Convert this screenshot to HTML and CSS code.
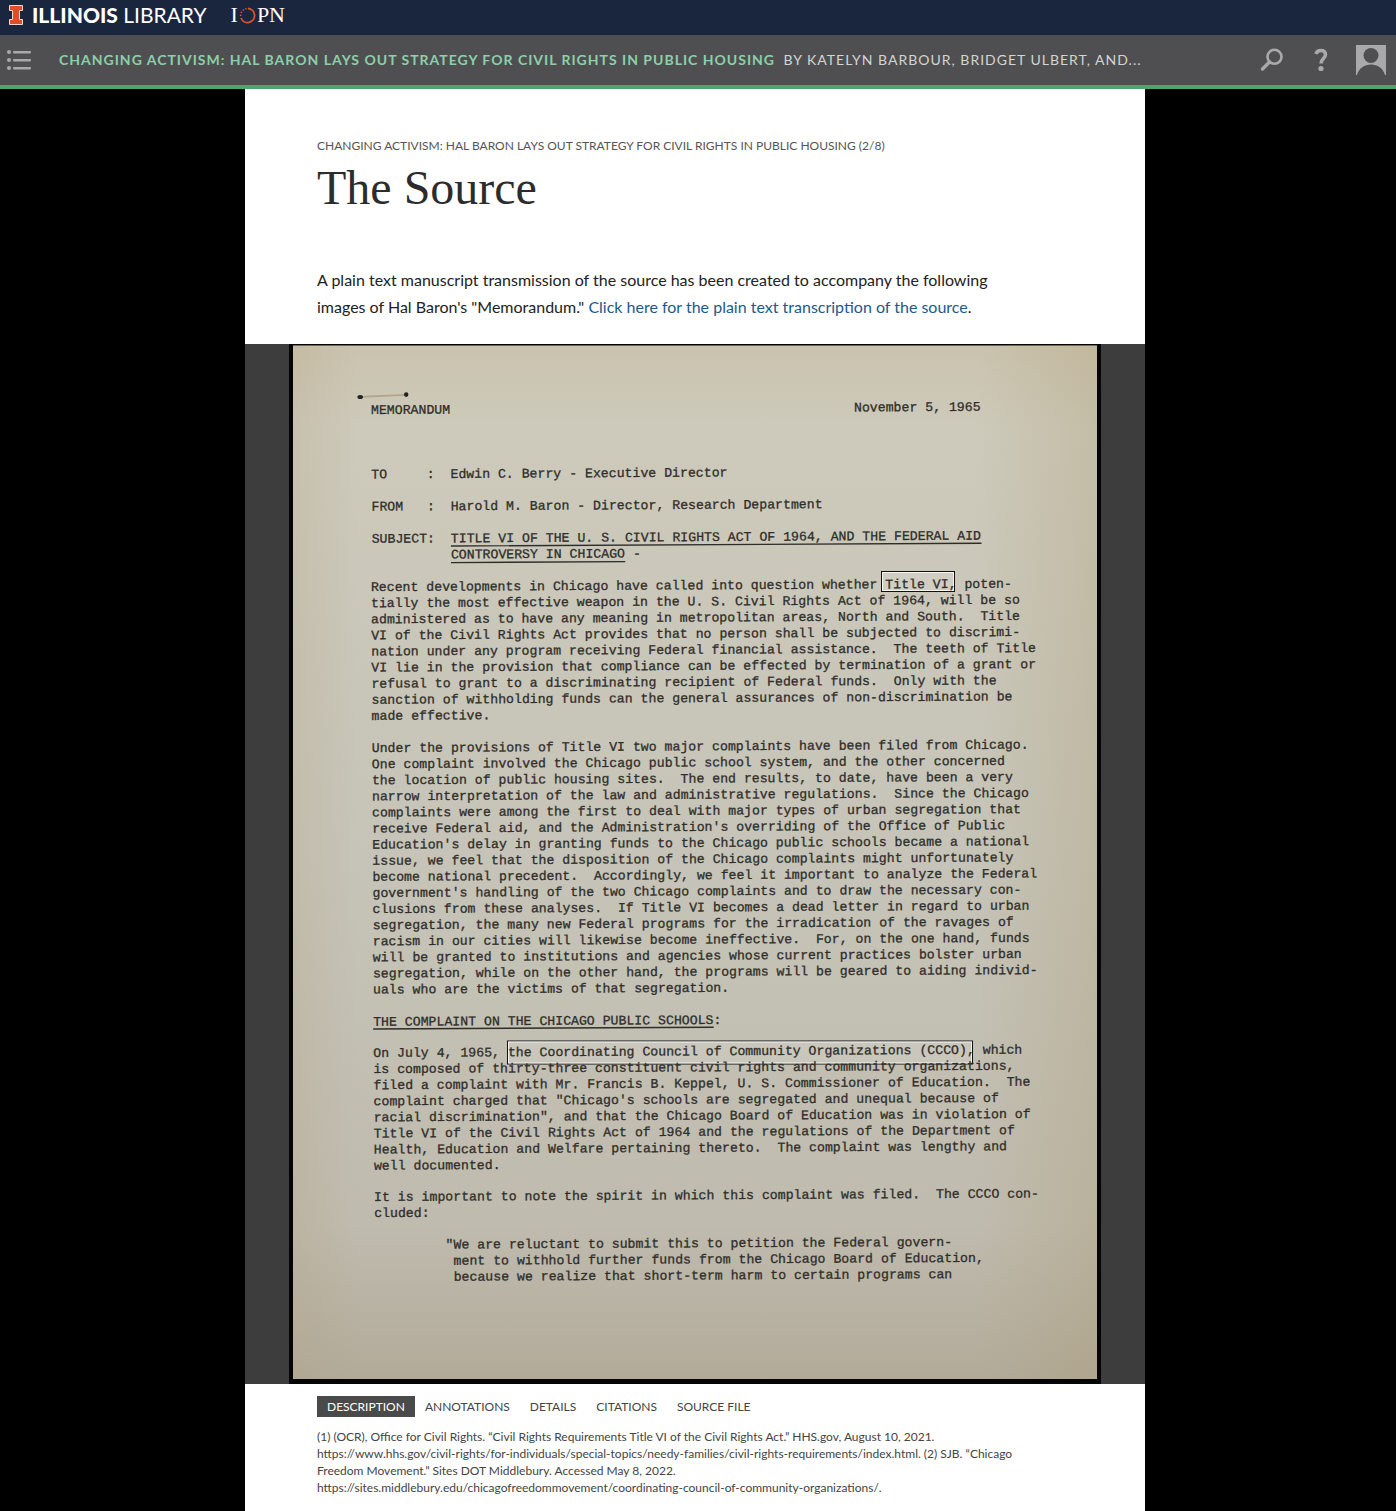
FILE: index.html
```html
<!DOCTYPE html>
<html lang="en">
<head>
<meta charset="utf-8">
<meta name="viewport" content="width=device-width, initial-scale=1">
<title>The Source</title>
<link rel="stylesheet" href="styles.css">
</head>
<body>
<header>
  <div class="brand-bar">
    <a class="brand" href="#" aria-label="Illinois Library">
      <svg class="block-i" width="14" height="20" viewBox="0 0 14 20" aria-hidden="true"><path d="M.5.5h13v5h-3v9h3v5H.5v-5h3v-9h-3z" fill="#e04e27" stroke="#f3d9d0"/></svg>
      <span class="brand-name"><strong>ILLINOIS</strong> LIBRARY</span>
    </a>
    <a class="iopn" href="#" aria-label="IOPN">I<svg width="17" height="17" viewBox="0 0 17 17" aria-hidden="true" fill="none" stroke="#d9532c"><path d="M9 1.500A7 7 0 1 1 2 11" stroke-width="1.800"/><path d="M1.700 9A7 7 0 0 1 8 1.500" stroke-width="1.600" stroke-dasharray="1.400 1.600"/></svg>PN</a>
  </div>
  <nav class="nav-bar">
    <button class="icon-button" aria-label="Contents"><svg width="24" height="20" viewBox="0 0 24 20" fill="#a9a9ab"><circle cx="2" cy="2" r="2"/><circle cx="2" cy="10" r="2"/><circle cx="2" cy="18" r="2"/><rect x="6" y="1" width="18" height="2.400" rx="1"/><rect x="6" y="9" width="18" height="2.400" rx="1"/><rect x="6" y="17" width="18" height="2.400" rx="1"/></svg></button>
    <p class="book"><a class="book-title" href="#">Changing Activism: Hal Baron Lays Out Strategy for Civil Rights in Public Housing</a> <span class="book-authors">by Katelyn Barbour, Bridget Ulbert, and...</span></p>
    <div class="tools">
      <button class="icon-button" aria-label="Search"><svg width="24" height="24" viewBox="0 0 24 24" fill="none" stroke="#a9a9ab"><circle cx="14.500" cy="8.800" r="7" stroke-width="2.600"/><path d="M9.500 14L2.500 21" stroke-width="3.400" stroke-linecap="round"/></svg></button>
      <button class="icon-button" aria-label="Help"><svg width="16" height="24" viewBox="-2 0 16 24" fill="none" stroke="#a9a9ab"><path d="M2 6C3 1.500 11.500 1 11.500 6.500C11.500 10.500 7 10.500 7 15.500" stroke-width="3.600"/><circle cx="7" cy="20.500" r="2.600" fill="#a9a9ab" stroke="none"/></svg></button>
      <button class="icon-button" aria-label="Account"><svg width="30" height="30" viewBox="0 0 30 30"><path d="M0 0h30v30h-1C27 23 21.500 19.500 15 19.500S3 23 1 30H0z" fill="#a9a9ab"/><circle cx="15" cy="10.500" r="7.500" fill="#4f4f51"/></svg></button>
    </div>
  </nav>
</header>
<main>
  <article class="page">
    <div class="intro">
      <p class="crumb">Changing Activism: Hal Baron Lays Out Strategy for Civil Rights in Public Housing (2/8)</p>
      <h1>The Source</h1>
      <p class="lead">A plain text manuscript transmission of the source has been created to accompany the following images of Hal Baron's "Memorandum." <a href="#">Click here for the plain text transcription of the source</a>.</p>
    </div>
    <figure class="media">
      <svg class="scan" viewBox="0 0 8120 10400" role="img" aria-label="Memorandum, November 5, 1965">
        <defs>
          <linearGradient id="paper" x1="0" y1="0" x2="0" y2="1"><stop offset="0" stop-color="#cac3ae"/><stop offset=".08" stop-color="#cdcabb"/><stop offset=".5" stop-color="#c6c4b8"/><stop offset=".85" stop-color="#bfbbae"/><stop offset="1" stop-color="#b2ab9a"/></linearGradient>
          <linearGradient id="edge"><stop offset="0" stop-color="#b09a78" stop-opacity=".2"/><stop offset=".08" stop-color="#b09a78" stop-opacity="0"/><stop offset=".85" stop-color="#a89568" stop-opacity="0"/><stop offset="1" stop-color="#a89568" stop-opacity=".25"/></linearGradient>
        </defs>
        <rect width="8120" height="10400" fill="#050505"/>
        <rect x="40" y="15" width="8040" height="10335" fill="url(#paper)"/>
        <rect x="40" y="15" width="8040" height="10335" fill="url(#edge)"/>
        <path d="M710 528L1170 508" stroke="#b5a486" stroke-width="18"/>
        <ellipse cx="712" cy="530" rx="28" ry="20" fill="#222"/><ellipse cx="1172" cy="506" rx="22" ry="24" fill="#222"/>
        <g class="note"><rect x="5925" y="2275" width="730" height="200"/><rect x="5935" y="2285" width="710" height="180"/></g>
        <g class="note"><rect x="2185" y="6970" width="4650" height="230"/><rect x="2195" y="6980" width="4630" height="210"/></g>
        <g class="typed" transform="rotate(-.3 820 700)">
          <text x="820" y="700">MEMORANDUM</text>
          <text x="5650" y="700">November 5, 1965</text>
          <text x="820" y="1344">TO     :  Edwin C. Berry - Executive Director</text>
          <text x="820" y="1666">FROM   :  Harold M. Baron - Director, Research Department</text>
          <text x="820" y="1988">SUBJECT:  TITLE VI OF THE U. S. CIVIL RIGHTS ACT OF 1964, AND THE FEDERAL AID</text>
          <text x="820" y="2149">          CONTROVERSY IN CHICAGO -</text>
          <path d="M1612 2024H6918M1612 2190H3355M810 6850H4215"/>
          <text x="810" y="2471">Recent developments in Chicago have called into question whether Title VI, poten-</text>
          <text x="810" y="2632">tially the most effective weapon in the U. S. Civil Rights Act of 1964, will be so</text>
          <text x="810" y="2793">administered as to have any meaning in metropolitan areas, North and South.  Title</text>
          <text x="810" y="2954">VI of the Civil Rights Act provides that no person shall be subjected to discrimi-</text>
          <text x="810" y="3115">nation under any program receiving Federal financial assistance.  The teeth of Title</text>
          <text x="810" y="3276">VI lie in the provision that compliance can be effected by termination of a grant or</text>
          <text x="810" y="3437">refusal to grant to a discriminating recipient of Federal funds.  Only with the</text>
          <text x="810" y="3598">sanction of withholding funds can the general assurances of non-discrimination be</text>
          <text x="810" y="3759">made effective.</text>
          <text x="810" y="4081">Under the provisions of Title VI two major complaints have been filed from Chicago.</text>
          <text x="810" y="4242">One complaint involved the Chicago public school system, and the other concerned</text>
          <text x="810" y="4403">the location of public housing sites.  The end results, to date, have been a very</text>
          <text x="810" y="4564">narrow interpretation of the law and administrative regulations.  Since the Chicago</text>
          <text x="810" y="4725">complaints were among the first to deal with major types of urban segregation that</text>
          <text x="810" y="4886">receive Federal aid, and the Administration's overriding of the Office of Public</text>
          <text x="810" y="5047">Education's delay in granting funds to the Chicago public schools became a national</text>
          <text x="810" y="5208">issue, we feel that the disposition of the Chicago complaints might unfortunately</text>
          <text x="810" y="5369">become national precedent.  Accordingly, we feel it important to analyze the Federal</text>
          <text x="810" y="5530">government's handling of the two Chicago complaints and to draw the necessary con-</text>
          <text x="810" y="5691">clusions from these analyses.  If Title VI becomes a dead letter in regard to urban</text>
          <text x="810" y="5852">segregation, the many new Federal programs for the irradication of the ravages of</text>
          <text x="810" y="6013">racism in our cities will likewise become ineffective.  For, on the one hand, funds</text>
          <text x="810" y="6174">will be granted to institutions and agencies whose current practices bolster urban</text>
          <text x="810" y="6335">segregation, while on the other hand, the programs will be geared to aiding individ-</text>
          <text x="810" y="6496">uals who are the victims of that segregation.</text>
          <text x="810" y="6818">THE COMPLAINT ON THE CHICAGO PUBLIC SCHOOLS:</text>
          <text x="810" y="7130">On July 4, 1965, the Coordinating Council of Community Organizations (CCCO), which</text>
          <text x="810" y="7291">is composed of thirty-three constituent civil rights and community organizations,</text>
          <text x="810" y="7452">filed a complaint with Mr. Francis B. Keppel, U. S. Commissioner of Education.  The</text>
          <text x="810" y="7613">complaint charged that "Chicago's schools are segregated and unequal because of</text>
          <text x="810" y="7774">racial discrimination", and that the Chicago Board of Education was in violation of</text>
          <text x="810" y="7935">Title VI of the Civil Rights Act of 1964 and the regulations of the Department of</text>
          <text x="810" y="8096">Health, Education and Welfare pertaining thereto.  The complaint was lengthy and</text>
          <text x="810" y="8257">well documented.</text>
          <text x="810" y="8570">It is important to note the spirit in which this complaint was filed.  The CCCO con-</text>
          <text x="810" y="8731">cluded:</text>
          <text x="810" y="9050">         "We are reluctant to submit this to petition the Federal govern-</text>
          <text x="810" y="9211">          ment to withhold further funds from the Chicago Board of Education,</text>
          <text x="810" y="9372">          because we realize that short-term harm to certain programs can</text>
        </g>
      </svg>
    </figure>
    <section class="details">
      <div class="tabs" role="tablist">
        <button role="tab" aria-selected="true">Description</button>
        <button role="tab" aria-selected="false">Annotations</button>
        <button role="tab" aria-selected="false">Details</button>
        <button role="tab" aria-selected="false">Citations</button>
        <button role="tab" aria-selected="false">Source File</button>
      </div>
      <p class="description">(1) (OCR), Office for Civil Rights. “Civil Rights Requirements Title VI of the Civil Rights Act.” HHS.gov, August 10, 2021. https://www.hhs.gov/civil-rights/for-individuals/special-topics/needy-families/civil-rights-requirements/index.html. (2) SJB. “Chicago Freedom Movement.” Sites DOT Middlebury. Accessed May 8, 2022. https://sites.middlebury.edu/chicagofreedommovement/coordinating-council-of-community-organizations/.</p>
    </section>
  </article>
</main>
</body>
</html>
```
FILE: styles.css
```css
* { box-sizing: border-box; }
body {
  margin: 0;
  background: #000;
  color: #333;
  font-family: Lato, "Liberation Sans", sans-serif;
}
a { color: inherit; text-decoration: none; }
p, h1, figure { margin: 0; }
button { padding: 0; border: 0; background: none; color: inherit; font: inherit; cursor: pointer; }
svg { display: block; }

.brand-bar {
  display: flex;
  align-items: center;
  gap: 24px;
  height: 35px;
  padding: 0 9px 5px;
  background: #1a253e;
  color: #fff;
}
.brand { display: flex; align-items: center; gap: 9px; }
.brand-name { font-size: 21px; line-height: 24px; font-weight: 400; }
.brand-name strong { font-weight: 900; }
.iopn {
  display: flex;
  align-items: center;
  gap: 1px;
  font-family: "Liberation Serif", serif;
  font-size: 22px;
  line-height: 24px;
}

.nav-bar {
  display: flex;
  align-items: center;
  height: 54px;
  padding: 0 10px 0 7px;
  background: #4f4f51;
  border-bottom: 4px solid #4ba66d;
}
.book {
  flex: 1;
  min-width: 0;
  margin: 0 24px 0 28px;
  overflow: hidden;
  white-space: nowrap;
  text-overflow: ellipsis;
  text-transform: uppercase;
  letter-spacing: 1px;
  font-size: 14px;
  line-height: 20px;
  color: #d4d4d4;
}
.book-title { font-weight: 700; color: #8ccfaa; }
.book-authors { margin-left: 4px; }
.tools { display: flex; align-items: center; gap: 28px; }

main { display: flex; justify-content: center; padding-right: 6px; }
.page { width: 100%; max-width: 900px; background: #fff; }
.intro { padding: 48px 150px 24px 72px; }
.crumb { font-size: 12px; line-height: 18px; text-transform: uppercase; color: #555; white-space: nowrap; }
h1 {
  margin: 5px 0 50px;
  font-family: "Liberation Serif", serif;
  font-size: 48px;
  line-height: 56px;
  font-weight: 400;
  color: #2c2c2c;
}
.lead { font-size: 16px; line-height: 27px; color: #222; }
.lead a { color: #1c5a8d; }

.media { background: #3d3d3d; }
.scan { width: 100%; max-width: 812px; height: auto; margin: 0 auto; }
.typed {
  font-family: "Liberation Mono", monospace;
  font-size: 132px;
  fill: #2f2d29;
  stroke: #2f2d29;
  stroke-width: 3px;
}
.typed text { white-space: pre; }
.typed path { stroke-width: 14px; }
.note rect { fill: none; stroke: #fff; stroke-opacity: .8; stroke-width: 10px; }
.note rect:first-child { fill: #fff; fill-opacity: .12; stroke: #111; stroke-opacity: 1; }

.details { padding: 12px 125px 16px 72px; }
.tabs { display: flex; }
.tabs button {
  padding: 0 10px;
  font-size: 12px;
  line-height: 21px;
  text-transform: uppercase;
  color: #444;
  white-space: nowrap;
}
.tabs button[aria-selected="true"] { background: #4a4a4a; color: #fff; }
.description { margin-top: 11px; font-size: 12px; line-height: 17px; color: #444; }
```
